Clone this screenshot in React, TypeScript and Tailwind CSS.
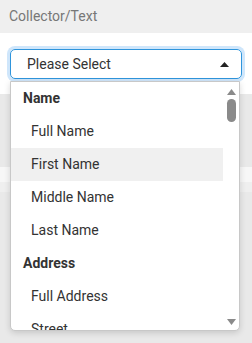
const groups = [
  { label: 'Name', items: ['Full Name', 'First Name', 'Middle Name', 'Last Name'] },
  { label: 'Address', items: ['Full Address', 'Street'] },
];

export default function App() {
  return (
    <div className="relative w-[252px] h-[343px] overflow-hidden bg-[#e9e9e9] font-['Roboto',sans-serif]">
      <div className="h-[33px] bg-[#efefef] px-[9px] flex items-center text-[14px] text-[#777]">
        Collector/Text
      </div>
      <div className="h-[61px] bg-white px-[10px] pt-[16px]">
        <div className="h-[30px] rounded-[5px] border border-[#2f95dc] ring-[3px] ring-[#cfe6fb] flex items-center justify-between pl-[16px] pr-[12px] text-[14px] text-[#333]">
          <span>Please Select</span>
          <svg width="9" height="5" viewBox="0 0 9 5">
            <path d="M0 5 L4.5 0 L9 5 Z" fill="#222" />
          </svg>
        </div>
      </div>
      <div className="h-[73px]" />
      <div className="h-[15px] bg-[#f7f7f7]" />
      <div className="h-[10px] bg-[#efefef]" />

      <div className="absolute left-[10px] top-[81px] w-[230px] h-[250px] bg-white border border-[#c8c8c8] rounded-b-[5px] shadow-[0_2px_6px_rgba(0,0,0,0.15)] overflow-hidden flex">
        <div className="flex-1 min-w-0">
          {groups.map((g) => (
            <div key={g.label}>
              <div className="h-[33px] flex items-center pl-[12px] text-[14px] font-bold text-[#333]">
                {g.label}
              </div>
              {g.items.map((it) => (
                <div
                  key={it}
                  className={`h-[33px] flex items-center pl-[20px] text-[14px] text-[#333] ${it === 'First Name' ? 'bg-[#f0f0f0]' : ''}`}
                >
                  {it}
                </div>
              ))}
            </div>
          ))}
        </div>
        <div className="w-[16px] shrink-0 flex flex-col items-center pt-[7px] pb-[5px]">
          <svg width="9" height="6" viewBox="0 0 9 6">
            <path d="M0 6 L4.5 0 L9 6 Z" fill="#8a8a8a" />
          </svg>
          <div className="mt-[4px] w-[9px] h-[23px] rounded-full bg-[#8a8a8a]" />
          <div className="flex-1" />
          <svg width="9" height="6" viewBox="0 0 9 6">
            <path d="M0 0 L9 0 L4.5 6 Z" fill="#8a8a8a" />
          </svg>
        </div>
      </div>
    </div>
  );
}
